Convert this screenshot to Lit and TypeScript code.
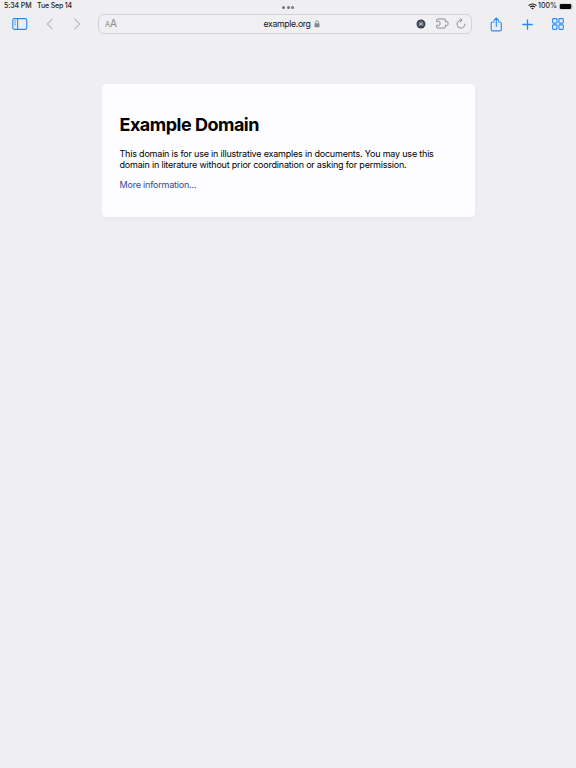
import { LitElement, html, css } from "lit";
import { customElement } from "lit/decorators.js";

@customElement("status-bar")
class StatusBar extends LitElement {
  static styles = css`
    :host { display: grid; grid-template-columns: 1fr auto 1fr; height: 12px; padding: 0 3.5px 0 4px; font-size: 7px; font-weight: 500; line-height: 12px; letter-spacing: -.1px; color: #222224; }
    .left { display: flex; gap: 5.5px; white-space: nowrap; }
    .date { letter-spacing: -.15px; }
    .dots { display: flex; gap: 1.6px; padding-top: 5.8px; }
    .dot { width: 3px; height: 3px; border-radius: 50%; background: #77777a; }
    .right { display: flex; justify-content: flex-end; align-items: center; }
    .percent { margin: 0 1.5px 0 1.5px; letter-spacing: 0; }
    svg { display: block; }
  `;
  render() {
    return html`
      <div class="left"><span>5:34 PM</span><span class="date">Tue Sep 14</span></div>
      <div class="dots"><i class="dot"></i><i class="dot"></i><i class="dot"></i></div>
      <div class="right">
        <svg width="9" height="7" viewBox="0 0 9 7" fill="none" stroke="#111" stroke-width="1.1">
          <path d="M.6 2.7C2.8.5 6.2.5 8.4 2.7M2.1 4.2C3.5 2.9 5.5 2.9 6.9 4.2" />
          <path d="M3.2 5.3Q4.5 4.2 5.8 5.3L4.5 6.6Z" fill="#111" stroke="none" />
        </svg>
        <span class="percent">100%</span>
        <svg width="14" height="7" viewBox="0 0 14 7">
          <rect x=".2" y=".3" width="12.6" height="6.4" rx="2" fill="#fff" stroke="#aaa" stroke-width=".5" />
          <rect x=".8" y="1" width="11.4" height="5" rx="1.3" fill="#080808" />
          <path d="M13.2 2.4Q14.1 3.5 13.2 4.6Z" fill="#999" />
        </svg>
      </div>`;
  }
}

@customElement("browser-toolbar")
class BrowserToolbar extends LitElement {
  static styles = css`
    :host { display: grid; grid-template-columns: 98px 374px 1fr; height: 26px; color: #2389fa; }
    svg { display: block; fill: none; stroke: currentColor; }
    .nav { display: flex; align-items: center; padding-left: 12px; height: 24px; }
    .back { margin-left: 18px; color: #bdbdc0; }
    .next { margin-left: 19px; color: #bdbdc0; }
    .address { box-sizing: border-box; display: grid; grid-template: 18px / 1fr auto 1fr; align-items: center; height: 20px; margin-top: 2px; padding: 0 5px 0 6px; border: 1px solid #d2d2d5; border-radius: 6px; color: #858588; background: #f0f0f2; }
    .reader { font-size: 10px; line-height: 20px; letter-spacing: -.1px; }
    .small { font-size: 7.3px; }
    .site { display: flex; align-items: center; height: 18px; gap: 3px; padding-left: 12px; margin-top: -1px; }
    .url { font-size: 8.7px; line-height: 17px; padding-top: 2px; letter-spacing: -.33px; color: #161618; }
    .tools { display: flex; justify-content: flex-end; align-items: center; height: 18px; margin-top: -1px; }
    .puzzle { margin: 0 7px 0 10px; }
    .actions { display: flex; align-items: center; height: 24px; padding-left: 17.5px; }
    .plus { margin-left: 19px; }
    .tabs { margin-left: 19px; }
  `;
  render() {
    return html`
      <div class="nav">
        <svg width="16" height="12" viewBox="0 0 16 12"><rect x=".8" y=".6" width="14" height="10.8" rx="1.7" stroke-width="1.1" /><path d="M5.6.6v10.8" stroke-width="1.1" /><path d="M2.3 3h1.8M2.3 4.9h1.8M2.3 6.8h1.8" stroke-width=".8" /></svg>
        <svg class="back" width="8" height="12" viewBox="0 0 8 12"><path d="M6.3 1 1.2 6l5.1 5" stroke-width="1.1" stroke-linecap="round" stroke-linejoin="round" /></svg>
        <svg class="next" width="8" height="12" viewBox="0 0 8 12"><path d="M1.7 1 6.8 6l-5.1 5" stroke-width="1.1" stroke-linecap="round" stroke-linejoin="round" /></svg>
      </div>
      <div class="address">
        <div class="reader"><span class="small">A</span>A</div>
        <div class="site">
          <span class="url">example.org</span>
          <svg width="6" height="8" viewBox="0 0 6 8"><rect x=".5" y="3.2" width="5" height="4" rx=".7" fill="currentColor" stroke="none" /><path d="M1.5 3.5V2.2a1.5 1.5 0 0 1 3 0v1.3" stroke-width=".8" /></svg>
        </div>
        <div class="tools">
          <svg width="10" height="10" viewBox="0 0 10 10"><circle cx="5" cy="5" r="4.5" fill="#3b444f" stroke="none" /><path d="m3.3 3.3 3.4 3.4m0-3.4L3.3 6.7" stroke="#b8c2cc" stroke-width="1.1" /><path d="M2.3 4v2m5.4-2v2M4 2.3h2" stroke="#8795a2" stroke-width=".6" /></svg>
          <svg class="puzzle" width="13" height="11" viewBox="0 0 13 11"><path d="M1.4 1h7.2q.8 0 .8.8v2h.8c.2-.7 1.8-.6 1.8.8v1.8c0 1.4-1.6 1.5-1.8.8h-.8v2q0 .8-.8.8H1.4q-.7 0-.7-.7V7.2h1c.3.7 2.3.6 2.3-.8V4.6c0-1.4-2-1.5-2.3-.8h-1V1.7q0-.7.7-.7Z" stroke-width=".9" /></svg>
          <svg width="10" height="11" viewBox="0 0 10 11"><path d="M5 2.1a4 4 0 1 0 4 4M3.9.4l2.2 1.8-2.1 2" stroke-width=".9" stroke-linecap="round" stroke-linejoin="round" /></svg>
        </div>
      </div>
      <div class="actions">
        <svg width="13" height="15" viewBox="0 0 13 15"><path d="M4.3 5H2.7Q1.2 5 1.2 6.5v5.9q0 1.5 1.5 1.5h7.1q1.5 0 1.5-1.5V6.5Q11.3 5 9.8 5H8.3M6.3 9.5V1M4 3.3 6.3 1l2.3 2.3" stroke-width="1.1" stroke-linecap="round" stroke-linejoin="round" /></svg>
        <svg class="plus" width="11" height="11" viewBox="0 0 11 11"><path d="M5.5.8v9.4M.8 5.5h9.4" stroke-width="1.3" stroke-linecap="round" /></svg>
        <svg class="tabs" width="12" height="12" viewBox="0 0 12 12" stroke-width="1.1"><rect x=".6" y=".6" width="4.4" height="4.5" rx=".8" /><rect x="6.9" y=".6" width="4.4" height="4.5" rx=".8" /><rect x=".6" y="6.9" width="4.4" height="4.5" rx=".8" /><rect x="6.9" y="6.9" width="4.4" height="4.5" rx=".8" /></svg>
      </div>`;
  }
}

@customElement("app-root")
class AppRoot extends LitElement {
  static styles = css`
    :host { display: block; height: 768px; overflow: hidden; background: #efeff1; font-family: Inter, "Liberation Sans", sans-serif; color: #000; }
    .card { box-sizing: border-box; width: 373px; height: 133.5px; margin: 45.5px auto 0; padding: 18px; border-radius: 4.5px; background: #fdfdff; box-shadow: 1px 2px 4px rgba(0, 0, 0, .025); }
    h1 { margin: 12px 0; font-size: 18px; line-height: 22px; font-weight: 700; letter-spacing: -.5px; }
    p { margin: 0 0 9px; font-size: 9px; line-height: 11px; letter-spacing: -.2px; white-space: nowrap; }
    a { color: #38488f; text-decoration: none; }
  `;
  render() {
    return html`
      <status-bar></status-bar>
      <browser-toolbar></browser-toolbar>
      <main class="card">
        <h1>Example Domain</h1>
        <p>This domain is for use in illustrative examples in documents. You may use this<br />domain in literature without prior coordination or asking for permission.</p>
        <p><a href="#">More information...</a></p>
      </main>`;
  }
}
